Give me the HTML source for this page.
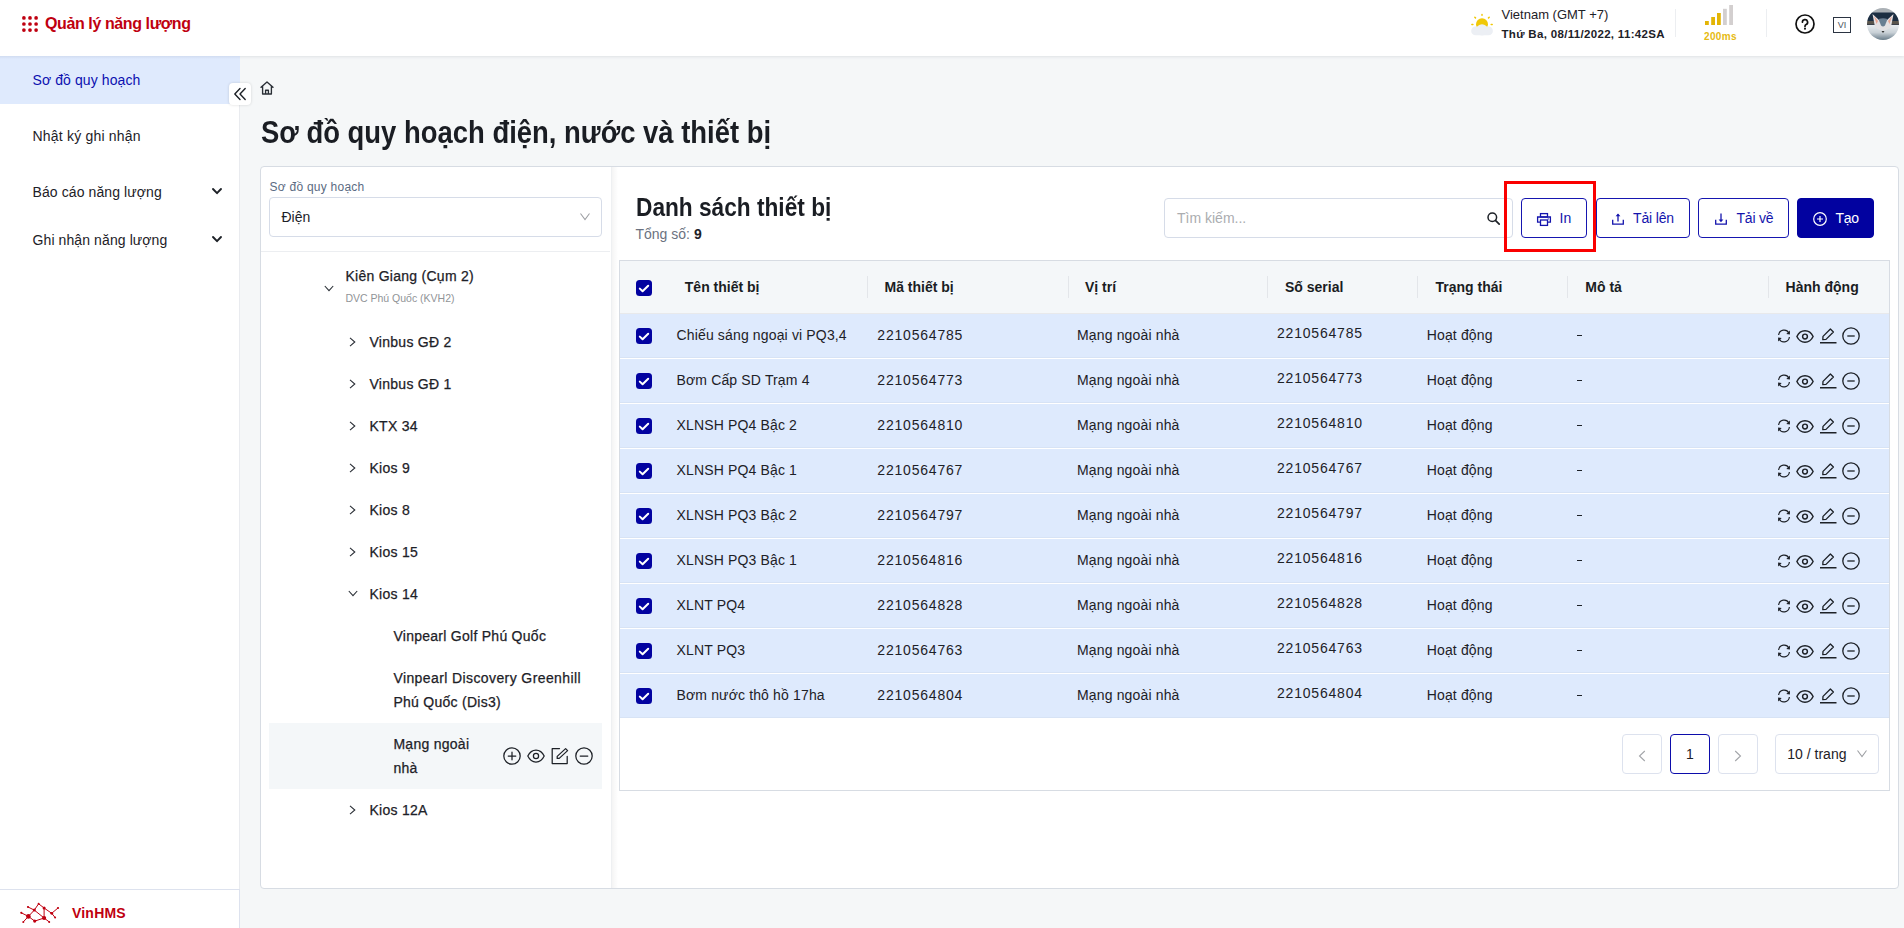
<!DOCTYPE html><html><head><meta charset="utf-8"><style>
*{box-sizing:border-box;margin:0;padding:0}
html,body{width:1904px;height:928px;overflow:hidden;background:#f5f7f8;font-family:"Liberation Sans",sans-serif;color:#1d2127}
.a{position:absolute;white-space:nowrap}
svg{display:block;position:absolute;overflow:visible}
.t14{font-size:14px;line-height:14px}
.chk{position:absolute;width:16px;height:16px;border-radius:3.5px;background:#0202a0}
.btn{position:absolute;top:198px;height:40px;border:1.3px solid #1616b0;border-radius:4px;background:#fff}
.pg{position:absolute;top:734px;width:40px;height:40px;border:1px solid #dde2ee;border-radius:4px;background:#fff}
</style></head><body>
<div class="a" style="left:0;top:0;width:1904px;height:56px;background:#fff;box-shadow:0 1px 3px rgba(30,40,60,.10)"></div>
<svg style="left:22px;top:16px" width="16" height="16" viewBox="0 0 16 16" fill="#bf0010"><circle cx="1.9" cy="1.9" r="1.85"/><circle cx="8" cy="1.9" r="1.85"/><circle cx="14.1" cy="1.9" r="1.85"/><circle cx="1.9" cy="8" r="1.85"/><circle cx="8" cy="8" r="1.85"/><circle cx="14.1" cy="8" r="1.85"/><circle cx="1.9" cy="14.1" r="1.85"/><circle cx="8" cy="14.1" r="1.85"/><circle cx="14.1" cy="14.1" r="1.85"/></svg>
<div class="a" style="left:45px;top:16.26px;font-size:16px;line-height:16px;font-weight:700;color:#bf0010;letter-spacing:-0.4px">Quản lý năng lượng</div>
<svg style="left:1470px;top:13px" width="24" height="22" viewBox="0 0 24 22">
<g stroke="#f0c808" stroke-width="1.5" stroke-linecap="round">
<line x1="12" y1="1.5" x2="12" y2="2.3"/><line x1="4.8" y1="4.2" x2="5.5" y2="4.9"/><line x1="19.2" y1="4.2" x2="18.5" y2="4.9"/>
<line x1="1.9" y1="11.5" x2="2.9" y2="11.5"/><line x1="21.2" y1="11.5" x2="22.2" y2="11.5"/></g>
<circle cx="12" cy="11.3" r="6" fill="#f0c808"/>
<rect x="1.2" y="13.6" width="21.7" height="8.6" rx="4.3" fill="#eceff4"/>
<circle cx="12" cy="16.8" r="5.6" fill="#eceff4"/>
</svg>
<div class="a" style="left:1501.5px;top:8.20px;font-size:13px;line-height:13px;color:#1d2127">Vietnam (GMT +7)</div>
<div class="a" style="left:1501.5px;top:28.67px;font-size:11.5px;line-height:11.5px;font-weight:700;color:#1d2127;letter-spacing:0.32px">Thứ Ba, 08/11/2022, 11:42SA</div>
<div class="a" style="left:1675px;top:9px;width:1px;height:28px;background:#eceef1"></div>
<svg style="left:1705px;top:5px" width="28" height="20" viewBox="0 0 28 20"><rect x="0" y="16" width="3.8" height="4" fill="#e3b505"/><rect x="6.2" y="12" width="3.8" height="8" fill="#e3b505"/><rect x="12" y="8" width="3.8" height="12" fill="#e3b505"/><rect x="18" y="3.8" width="3.8" height="16.2" fill="#d3cfcf"/><rect x="24.2" y="0" width="3.8" height="20" fill="#d3cfcf"/></svg>
<div class="a" style="left:1704px;top:31.54px;font-size:10px;line-height:10px;font-weight:700;color:#e6ba10;letter-spacing:0.35px">200ms</div>
<div class="a" style="left:1766px;top:9px;width:1px;height:28px;background:#eceef1"></div>
<svg style="left:1795px;top:14px" width="20" height="20" viewBox="0 0 20 20"><circle cx="10" cy="10" r="9" fill="none" stroke="#111" stroke-width="1.7"/><path d="M7.4 8.2 a2.6 2.6 0 1 1 3.7 2.3 c-0.8 0.4 -1.1 0.9 -1.1 1.7 v0.4" fill="none" stroke="#111" stroke-width="1.7" stroke-linecap="round"/><circle cx="10" cy="14.7" r="1.05" fill="#111"/></svg>
<div class="a" style="left:1833px;top:17px;width:18px;height:16px;border:1.3px solid #2b3442"></div>
<div class="a" style="left:1833px;top:20px;width:18px;text-align:center;font-size:9px;line-height:10px;color:#4a5260">VI</div>
<svg style="left:1867px;top:8px" width="32" height="32" viewBox="0 0 32 32">
<defs><clipPath id="av"><circle cx="16" cy="16" r="16"/></clipPath>
<linearGradient id="fur" x1="0" y1="0" x2="0" y2="1"><stop offset="0" stop-color="#e9edf0"/><stop offset="0.45" stop-color="#c8d0d6"/><stop offset="1" stop-color="#4f6676"/></linearGradient>
<filter id="bl"><feGaussianBlur stdDeviation="0.5"/></filter></defs>
<g clip-path="url(#av)"><g filter="url(#bl)">
<rect x="-2" y="-2" width="36" height="36" fill="#1d2d42"/>
<rect x="-2" y="-2" width="36" height="6.5" fill="#aab0b5"/>
<rect x="-2" y="13" width="36" height="3.5" fill="#5a544e"/>
<rect x="-2" y="17" width="36" height="17" fill="url(#fur)"/>
<path d="M5.5 6 L12 12 L20 12 L26.5 6 L24 19 Q16 26 8 19 Z" fill="#e4e1e3"/>
<path d="M7 8 L11 13 L9.5 16Z M25 8 L21 13 L22.5 16Z" fill="#e9a592"/>
<path d="M11.5 11 Q16 9.5 20.5 11 L18 17.5 Q16 19.5 14 17.5Z" fill="#6b7f92"/>
<path d="M14.5 23 L17.5 23 L16 25Z" fill="#333"/>
</g></g></svg>
<div class="a" style="left:0;top:56px;width:240px;height:872px;background:#fff;border-right:1px solid #e9ebef"></div>
<div class="a" style="left:239px;top:889px;width:1px;height:39px;background:#dde2ee"></div>
<div class="a" style="left:0;top:56px;width:240px;height:48px;background:#dfeafd"></div>
<div class="a" style="left:0;top:56px;width:240px;height:3px;background:linear-gradient(rgba(40,60,100,.08),rgba(40,60,100,0))"></div>
<div class="a t14" style="left:32.5px;top:73.15px;color:#0c10b0;letter-spacing:0.1px">Sơ đồ quy hoạch</div>
<div class="a t14" style="left:32.5px;top:128.95px;color:#1d2127;letter-spacing:0.2px">Nhật ký ghi nhận</div>
<div class="a t14" style="left:32.5px;top:184.85px;color:#1d2127;letter-spacing:0.1px">Báo cáo năng lượng</div>
<div class="a t14" style="left:32.5px;top:232.85px;color:#1d2127;letter-spacing:0.1px">Ghi nhận năng lượng</div>
<svg style="left:212px;top:188.4px" width="10" height="7" viewBox="0 0 10 7"><path d="M1 1 L5 5.2 L9 1" fill="none" stroke="#1d2127" stroke-width="1.9" stroke-linecap="round" stroke-linejoin="round"/></svg>
<svg style="left:212px;top:236px" width="10" height="7" viewBox="0 0 10 7"><path d="M1 1 L5 5.2 L9 1" fill="none" stroke="#1d2127" stroke-width="1.9" stroke-linecap="round" stroke-linejoin="round"/></svg>
<div class="a" style="left:0;top:889px;width:239px;height:1px;background:#dde2ee"></div>
<svg style="left:19px;top:902px" width="42" height="22" viewBox="0 0 42 22">
<g stroke="#bf0010" stroke-width="1" fill="none" stroke-linecap="round">
<path d="M2.3 10.8 L9.4 14.4 L4.3 19.9 M9.4 14.4 L15.3 8.1 L9 5 M15.3 8.1 L19.6 1.8 L25.1 6 L25.1 16 L30.2 19.9 M9.4 14.4 L15.7 19.1 L25.1 16 M15.3 8.1 L25.1 16 M25.1 6 L32.7 11.3 L39 6 M32.7 11.3 L36.1 15.5"/>
</g>
<g fill="#bf0010">
<circle cx="9.4" cy="14.4" r="2.3"/><circle cx="25.1" cy="16" r="2.1"/><circle cx="15.7" cy="19.1" r="1.6"/><circle cx="15.3" cy="8.1" r="1.5"/>
<circle cx="25.1" cy="6" r="1.5"/><circle cx="32.7" cy="11.3" r="1.4"/><circle cx="19.6" cy="1.8" r="1"/><circle cx="9" cy="5" r="1.1"/>
<circle cx="2.3" cy="10.8" r="1.1"/><circle cx="4.3" cy="19.9" r="1"/><circle cx="30.2" cy="19.9" r="1"/><circle cx="39" cy="6" r="1.1"/><circle cx="36.1" cy="15.5" r="1"/>
</g></svg>
<div class="a" style="left:72px;top:906.15px;font-size:14px;line-height:14px;font-weight:700;color:#bf0010;letter-spacing:0.2px">VinHMS</div>
<div class="a" style="left:229px;top:83px;width:22px;height:22px;background:#fff;border-radius:4px;box-shadow:0 0 3px rgba(0,0,0,.15)"></div>
<svg style="left:233px;top:87px" width="14" height="14" viewBox="0 0 14 14"><path d="M7 1.5 L1.8 7 L7 12.5 M12.2 1.5 L7 7 L12.2 12.5" fill="none" stroke="#1d2127" stroke-width="1.4" stroke-linecap="round" stroke-linejoin="round"/></svg>
<svg style="left:260px;top:81px" width="14" height="14" viewBox="0 0 14 14"><path d="M1 6.3 L7 1 L13 6.3 M2.6 5.2 V13 H11.4 V5.2 M5.6 13 V9.2 H8.4 V13" fill="none" stroke="#2a2f36" stroke-width="1.35" stroke-linejoin="round" stroke-linecap="round"/></svg>
<div class="a" style="left:260.5px;top:117.06px;font-size:31px;line-height:31px;font-weight:700;color:#1a1d23;transform:scaleX(0.885);transform-origin:0 0">Sơ đồ quy hoạch điện, nước và thiết bị</div>
<div class="a" style="left:260px;top:166px;width:1639px;height:723px;background:#fff;border:1px solid #d7dce3;border-radius:4px"></div>
<div class="a" style="left:269.5px;top:180.54px;font-size:12px;line-height:12px;color:#5b6b82;letter-spacing:0.25px">Sơ đồ quy hoạch</div>
<div class="a" style="left:269px;top:197px;width:333px;height:40px;border:1px solid #d6dce8;border-radius:4px;background:#fff"></div>
<div class="a t14" style="left:281.5px;top:210.15px;color:#1d2127">Điện</div>
<svg style="left:579.8px;top:212.8px" width="10" height="7.2" viewBox="0 0 10 7.2"><path d="M0.5 0.5 L5 6.6 L9.5 0.5" fill="none" stroke="#9c9ea2" stroke-width="1.05"/></svg>
<div class="a" style="left:261px;top:251px;width:349px;height:1px;background:#eceef1"></div>
<div class="a" style="left:611px;top:167px;width:1px;height:721px;background:#eef0f2"></div>
<div class="a" style="left:612px;top:167px;width:6px;height:721px;background:linear-gradient(90deg,rgba(0,0,0,.045),rgba(0,0,0,0))"></div>
<svg style="left:324px;top:285px" width="10" height="7" viewBox="0 0 10 7"><path d="M0.8 1 L5 5.6 L9.2 1" fill="none" stroke="#2a2f36" stroke-width="1.1"/></svg>
<div class="a" style="left:345.4px;top:268.95px;font-size:14px;line-height:14px;color:#1d2127;-webkit-text-stroke:0.25px #1d2127;letter-spacing:0.27px">Kiên Giang (Cụm 2)</div>
<div class="a" style="left:345.4px;top:293.31px;font-size:10.5px;line-height:10.5px;color:#919497">DVC Phú Quốc (KVH2)</div>
<svg style="left:349px;top:337.09999999999997px" width="7" height="10" viewBox="0 0 7 10"><path d="M1 0.8 L5.8 5 L1 9.2" fill="none" stroke="#2a2f36" stroke-width="1.1"/></svg>
<div class="a" style="left:369.5px;top:334.85px;font-size:14px;line-height:14px;color:#1d2127;-webkit-text-stroke:0.25px #1d2127;letter-spacing:0.27px">Vinbus GĐ 2</div>
<svg style="left:349px;top:379.09999999999997px" width="7" height="10" viewBox="0 0 7 10"><path d="M1 0.8 L5.8 5 L1 9.2" fill="none" stroke="#2a2f36" stroke-width="1.1"/></svg>
<div class="a" style="left:369.5px;top:376.85px;font-size:14px;line-height:14px;color:#1d2127;-webkit-text-stroke:0.25px #1d2127;letter-spacing:0.27px">Vinbus GĐ 1</div>
<svg style="left:349px;top:421.09999999999997px" width="7" height="10" viewBox="0 0 7 10"><path d="M1 0.8 L5.8 5 L1 9.2" fill="none" stroke="#2a2f36" stroke-width="1.1"/></svg>
<div class="a" style="left:369.5px;top:418.85px;font-size:14px;line-height:14px;color:#1d2127;-webkit-text-stroke:0.25px #1d2127;letter-spacing:0.27px">KTX 34</div>
<svg style="left:349px;top:463.09999999999997px" width="7" height="10" viewBox="0 0 7 10"><path d="M1 0.8 L5.8 5 L1 9.2" fill="none" stroke="#2a2f36" stroke-width="1.1"/></svg>
<div class="a" style="left:369.5px;top:460.85px;font-size:14px;line-height:14px;color:#1d2127;-webkit-text-stroke:0.25px #1d2127;letter-spacing:0.27px">Kios 9</div>
<svg style="left:349px;top:505.1px" width="7" height="10" viewBox="0 0 7 10"><path d="M1 0.8 L5.8 5 L1 9.2" fill="none" stroke="#2a2f36" stroke-width="1.1"/></svg>
<div class="a" style="left:369.5px;top:502.85px;font-size:14px;line-height:14px;color:#1d2127;-webkit-text-stroke:0.25px #1d2127;letter-spacing:0.27px">Kios 8</div>
<svg style="left:349px;top:547.1px" width="7" height="10" viewBox="0 0 7 10"><path d="M1 0.8 L5.8 5 L1 9.2" fill="none" stroke="#2a2f36" stroke-width="1.1"/></svg>
<div class="a" style="left:369.5px;top:544.85px;font-size:14px;line-height:14px;color:#1d2127;-webkit-text-stroke:0.25px #1d2127;letter-spacing:0.27px">Kios 15</div>
<svg style="left:348px;top:590.2px" width="10" height="7" viewBox="0 0 10 7"><path d="M0.8 1 L5 5.6 L9.2 1" fill="none" stroke="#2a2f36" stroke-width="1.1"/></svg>
<div class="a" style="left:369.5px;top:586.85px;font-size:14px;line-height:14px;color:#1d2127;-webkit-text-stroke:0.25px #1d2127;letter-spacing:0.27px">Kios 14</div>
<div class="a" style="left:393.4px;top:629.15px;font-size:14px;line-height:14px;color:#1d2127;-webkit-text-stroke:0.25px #1d2127;letter-spacing:0.27px">Vinpearl Golf Phú Quốc</div>
<div class="a" style="left:393.4px;top:671.45px;font-size:14px;line-height:14px;color:#1d2127;-webkit-text-stroke:0.25px #1d2127;letter-spacing:0.27px;letter-spacing:0.4px">Vinpearl Discovery Greenhill</div>
<div class="a" style="left:393.4px;top:695.25px;font-size:14px;line-height:14px;color:#1d2127;-webkit-text-stroke:0.25px #1d2127;letter-spacing:0.27px">Phú Quốc (Dis3)</div>
<div class="a" style="left:269px;top:723px;width:333px;height:66px;background:#f4f7f9"></div>
<div class="a" style="left:393.4px;top:737.45px;font-size:14px;line-height:14px;color:#1d2127;-webkit-text-stroke:0.25px #1d2127;letter-spacing:0.27px">Mạng ngoài</div>
<div class="a" style="left:393.4px;top:761.15px;font-size:14px;line-height:14px;color:#1d2127;-webkit-text-stroke:0.25px #1d2127;letter-spacing:0.27px">nhà</div>
<svg style="left:349px;top:805.4px" width="7" height="10" viewBox="0 0 7 10"><path d="M1 0.8 L5.8 5 L1 9.2" fill="none" stroke="#2a2f36" stroke-width="1.1"/></svg>
<div class="a" style="left:369.5px;top:803.15px;font-size:14px;line-height:14px;color:#1d2127;-webkit-text-stroke:0.25px #1d2127;letter-spacing:0.27px">Kios 12A</div>
<svg style="left:502.5px;top:747px" width="18" height="18" viewBox="0 0 18 18"><g fill="none" stroke="#1d2127" stroke-width="1.25" stroke-linecap="round" stroke-linejoin="round"><circle cx="9" cy="9" r="8.2"/><path d="M9 5.2 V12.8 M5.2 9 H12.8"/></g></svg>
<svg style="left:526.5px;top:749px" width="18" height="14" viewBox="0 0 18 14"><g fill="none" stroke="#1d2127" stroke-width="1.25" stroke-linecap="round" stroke-linejoin="round"><path d="M0.8 7 C3 2.4 6 1 9 1 C12 1 15 2.4 17.2 7 C15 11.6 12 13 9 13 C6 13 3 11.6 0.8 7Z"/><circle cx="9" cy="7" r="2.6"/></g></svg>
<svg style="left:551px;top:747px" width="18" height="18" viewBox="0 0 18 18"><g fill="none" stroke="#1d2127" stroke-width="1.25" stroke-linecap="round" stroke-linejoin="round"><path d="M8.5 1.6 H1.2 V16.6 H16.2 V9.3"/><path d="M14.6 1.6 L16.6 3.6 L8.2 11.4 H6.2 V9.4Z"/></g></svg>
<svg style="left:575px;top:747px" width="18" height="18" viewBox="0 0 18 18"><g fill="none" stroke="#1d2127" stroke-width="1.25" stroke-linecap="round" stroke-linejoin="round"><circle cx="9" cy="9" r="8.2"/><path d="M5.2 9 H12.8"/></g></svg>
<div class="a" style="left:635.5px;top:194.84px;font-size:25px;line-height:25px;font-weight:700;color:#1a1d23;transform:scaleX(0.907);transform-origin:0 0">Danh sách thiết bị</div>
<div class="a t14" style="left:635.5px;top:226.85px;color:#6b7280">Tổng số: <b style="color:#1d2127">9</b></div>
<div class="a" style="left:1164px;top:198px;width:349px;height:40px;border:1px solid #d6dce8;border-radius:4px;background:#fff"></div>
<div class="a t14" style="left:1177px;top:211.15px;color:#abadb0">Tìm kiếm...</div>
<svg style="left:1487px;top:212px" width="13" height="13" viewBox="0 0 13 13"><circle cx="5.3" cy="5.3" r="4.3" fill="none" stroke="#1d2127" stroke-width="1.5"/><path d="M8.4 8.4 L12.2 12.2" stroke="#1d2127" stroke-width="1.7" stroke-linecap="round"/></svg>
<div class="btn" style="left:1521px;width:66px"></div>
<svg style="left:1537px;top:212.5px" width="14" height="13" viewBox="0 0 14 13"><g fill="none" stroke="#1414ad" stroke-width="1.3"><rect x="3.5" y="0.6" width="7" height="3.4"/><path d="M3.5 9.2 H0.6 V4 H13.4 V9.2 H10.5"/><rect x="3.5" y="7" width="7" height="5.4"/></g><circle cx="11.2" cy="5.9" r="0.6" fill="#1414ad"/></svg>
<div class="a t14" style="left:1559.5px;top:211.05px;color:#1414ad">In</div>
<div class="btn" style="left:1595.5px;width:94.5px"></div>
<svg style="left:1612px;top:212.7px" width="12" height="12" viewBox="0 0 12 12"><g fill="none" stroke="#1414ad" stroke-width="1.3"><path d="M0.7 6.8 V11.2 H11.3 V6.8"/><path d="M6 8.4 V1.5"/></g><path d="M3.6 3.2 L6 0.6 L8.4 3.2Z" fill="#1414ad"/></svg>
<div class="a t14" style="left:1633px;top:211.05px;color:#1414ad;letter-spacing:-0.15px">Tải lên</div>
<div class="btn" style="left:1698px;width:91px"></div>
<svg style="left:1715px;top:213px" width="12" height="12" viewBox="0 0 12 12"><g fill="none" stroke="#1414ad" stroke-width="1.3"><path d="M0.7 6.8 V11.2 H11.3 V6.8"/><path d="M6 0.5 V7.2"/></g><path d="M3.6 6.6 L6 9.2 L8.4 6.6Z" fill="#1414ad"/></svg>
<div class="a t14" style="left:1736.5px;top:211.05px;color:#1414ad;letter-spacing:-0.2px">Tải về</div>
<div class="btn" style="left:1797px;width:77px;background:#0202a0;border-color:#0202a0"></div>
<svg style="left:1813px;top:212px" width="14" height="14" viewBox="0 0 14 14"><g fill="none" stroke="#fff" stroke-width="1.2"><circle cx="7" cy="7" r="6.3"/><path d="M7 4 V10 M4 7 H10"/></g></svg>
<div class="a t14" style="left:1835.5px;top:211.05px;color:#fff;letter-spacing:-0.3px">Tạo</div>
<div class="a" style="left:1504px;top:181px;width:92px;height:71px;border:3px solid #fa0000"></div>
<div class="a" style="left:619px;top:260px;width:1271px;height:531px;border:1px solid #d7dce3;background:#fff"></div>
<div class="a" style="left:620px;top:261px;width:1269px;height:53px;background:#f4f7f9;border-bottom:1px solid #e8e9eb"></div>
<div class="chk" style="left:636px;top:280px"></div><svg style="left:636px;top:280px" width="16" height="16" viewBox="0 0 16 16"><path d="M3.8 8.6 L6.6 11.3 L12.2 5.8" fill="none" stroke="#fff" stroke-width="2" stroke-linecap="round" stroke-linejoin="round"/></svg>
<div class="a" style="left:684.8px;top:279.95px;font-size:14px;line-height:14px;font-weight:700;color:#1a1d23">Tên thiết bị</div>
<div class="a" style="left:884.5px;top:279.95px;font-size:14px;line-height:14px;font-weight:700;color:#1a1d23">Mã thiết bị</div>
<div class="a" style="left:1085px;top:279.95px;font-size:14px;line-height:14px;font-weight:700;color:#1a1d23">Vị trí</div>
<div class="a" style="left:1285px;top:279.95px;font-size:14px;line-height:14px;font-weight:700;color:#1a1d23">Số serial</div>
<div class="a" style="left:1435.5px;top:279.95px;font-size:14px;line-height:14px;font-weight:700;color:#1a1d23">Trạng thái</div>
<div class="a" style="left:1585.3px;top:279.95px;font-size:14px;line-height:14px;font-weight:700;color:#1a1d23">Mô tả</div>
<div class="a" style="left:1785.6px;top:279.95px;font-size:14px;line-height:14px;font-weight:700;color:#1a1d23">Hành động</div>
<div class="a" style="left:867px;top:276px;width:1px;height:22px;background:#e3e6ea"></div>
<div class="a" style="left:1068px;top:276px;width:1px;height:22px;background:#e3e6ea"></div>
<div class="a" style="left:1267px;top:276px;width:1px;height:22px;background:#e3e6ea"></div>
<div class="a" style="left:1417px;top:276px;width:1px;height:22px;background:#e3e6ea"></div>
<div class="a" style="left:1567px;top:276px;width:1px;height:22px;background:#e3e6ea"></div>
<div class="a" style="left:1768px;top:276px;width:1px;height:22px;background:#e3e6ea"></div>
<div class="a" style="left:620px;top:314px;width:1269px;height:44px;background:#deeafd;border-bottom:1px solid #d7e3f5"></div>
<div class="chk" style="left:636px;top:328px"></div><svg style="left:636px;top:328px" width="16" height="16" viewBox="0 0 16 16"><path d="M3.8 8.6 L6.6 11.3 L12.2 5.8" fill="none" stroke="#fff" stroke-width="2" stroke-linecap="round" stroke-linejoin="round"/></svg>
<div class="a" style="left:676.5px;top:328.05px;font-size:14px;line-height:14px;color:#1d2127;letter-spacing:0.15px">Chiếu sáng ngoại vi PQ3,4</div>
<div class="a" style="left:877.3px;top:328.05px;font-size:14px;line-height:14px;color:#1d2127;letter-spacing:0.15px;letter-spacing:0.8px">2210564785</div>
<div class="a" style="left:1077px;top:328.05px;font-size:14px;line-height:14px;color:#1d2127;letter-spacing:0.15px">Mạng ngoài nhà</div>
<div class="a" style="left:1277px;top:325.85px;font-size:14px;line-height:14px;color:#1d2127;letter-spacing:0.15px;letter-spacing:0.8px">2210564785</div>
<div class="a" style="left:1426.7px;top:328.05px;font-size:14px;line-height:14px;color:#1d2127;letter-spacing:0.15px">Hoạt động</div>
<div class="a" style="left:1577.3px;top:334.70px;width:5px;height:1.6px;background:#1d2127"></div>
<svg style="left:1776.5px;top:329px" width="14" height="14" viewBox="0 0 14 14"><g fill="none" stroke="#1d2127" stroke-width="1.2"><path d="M1.6 6 A5.5 5.5 0 0 1 12 4.2"/><path d="M12.4 8 A5.5 5.5 0 0 1 2 9.8"/></g><path d="M12.9 1.6 L12.9 5.4 L9.3 4.9Z M1.1 12.4 L1.1 8.6 L4.7 9.1Z" fill="#1d2127"/></svg>
<svg style="left:1796px;top:329.5px" width="18" height="13" viewBox="0 0 18 13"><g fill="none" stroke="#1d2127" stroke-width="1.45"><path d="M0.9 6.5 C3 2 6 0.8 9 0.8 C12 0.8 15 2 17.1 6.5 C15 11 12 12.2 9 12.2 C6 12.2 3 11 0.9 6.5Z"/><circle cx="9" cy="6.5" r="2.4"/></g></svg>
<svg style="left:1820px;top:327px" width="17" height="17" viewBox="0 0 17 17"><g fill="none" stroke="#1d2127" stroke-width="1.3" stroke-linejoin="round"><path d="M2.8 12.6 L3 9.4 L10.4 2 L13.4 5 L6 12.4Z"/></g><rect x="0" y="15" width="16.5" height="1.5" fill="#1d2127"/></svg>
<svg style="left:1842px;top:327px" width="18" height="18" viewBox="0 0 18 18"><g fill="none" stroke="#1d2127" stroke-width="1.3"><circle cx="9" cy="9" r="8.2"/><path d="M5.3 9 H12.7"/></g></svg>
<div class="a" style="left:620px;top:359px;width:1269px;height:44px;background:#deeafd;border-bottom:1px solid #d7e3f5"></div>
<div class="chk" style="left:636px;top:373px"></div><svg style="left:636px;top:373px" width="16" height="16" viewBox="0 0 16 16"><path d="M3.8 8.6 L6.6 11.3 L12.2 5.8" fill="none" stroke="#fff" stroke-width="2" stroke-linecap="round" stroke-linejoin="round"/></svg>
<div class="a" style="left:676.5px;top:373.05px;font-size:14px;line-height:14px;color:#1d2127;letter-spacing:0.15px">Bơm Cấp SD Trạm 4</div>
<div class="a" style="left:877.3px;top:373.05px;font-size:14px;line-height:14px;color:#1d2127;letter-spacing:0.15px;letter-spacing:0.8px">2210564773</div>
<div class="a" style="left:1077px;top:373.05px;font-size:14px;line-height:14px;color:#1d2127;letter-spacing:0.15px">Mạng ngoài nhà</div>
<div class="a" style="left:1277px;top:370.85px;font-size:14px;line-height:14px;color:#1d2127;letter-spacing:0.15px;letter-spacing:0.8px">2210564773</div>
<div class="a" style="left:1426.7px;top:373.05px;font-size:14px;line-height:14px;color:#1d2127;letter-spacing:0.15px">Hoạt động</div>
<div class="a" style="left:1577.3px;top:379.70px;width:5px;height:1.6px;background:#1d2127"></div>
<svg style="left:1776.5px;top:374px" width="14" height="14" viewBox="0 0 14 14"><g fill="none" stroke="#1d2127" stroke-width="1.2"><path d="M1.6 6 A5.5 5.5 0 0 1 12 4.2"/><path d="M12.4 8 A5.5 5.5 0 0 1 2 9.8"/></g><path d="M12.9 1.6 L12.9 5.4 L9.3 4.9Z M1.1 12.4 L1.1 8.6 L4.7 9.1Z" fill="#1d2127"/></svg>
<svg style="left:1796px;top:374.5px" width="18" height="13" viewBox="0 0 18 13"><g fill="none" stroke="#1d2127" stroke-width="1.45"><path d="M0.9 6.5 C3 2 6 0.8 9 0.8 C12 0.8 15 2 17.1 6.5 C15 11 12 12.2 9 12.2 C6 12.2 3 11 0.9 6.5Z"/><circle cx="9" cy="6.5" r="2.4"/></g></svg>
<svg style="left:1820px;top:372px" width="17" height="17" viewBox="0 0 17 17"><g fill="none" stroke="#1d2127" stroke-width="1.3" stroke-linejoin="round"><path d="M2.8 12.6 L3 9.4 L10.4 2 L13.4 5 L6 12.4Z"/></g><rect x="0" y="15" width="16.5" height="1.5" fill="#1d2127"/></svg>
<svg style="left:1842px;top:372px" width="18" height="18" viewBox="0 0 18 18"><g fill="none" stroke="#1d2127" stroke-width="1.3"><circle cx="9" cy="9" r="8.2"/><path d="M5.3 9 H12.7"/></g></svg>
<div class="a" style="left:620px;top:404px;width:1269px;height:44px;background:#deeafd;border-bottom:1px solid #d7e3f5"></div>
<div class="chk" style="left:636px;top:418px"></div><svg style="left:636px;top:418px" width="16" height="16" viewBox="0 0 16 16"><path d="M3.8 8.6 L6.6 11.3 L12.2 5.8" fill="none" stroke="#fff" stroke-width="2" stroke-linecap="round" stroke-linejoin="round"/></svg>
<div class="a" style="left:676.5px;top:418.05px;font-size:14px;line-height:14px;color:#1d2127;letter-spacing:0.15px">XLNSH PQ4 Bậc 2</div>
<div class="a" style="left:877.3px;top:418.05px;font-size:14px;line-height:14px;color:#1d2127;letter-spacing:0.15px;letter-spacing:0.8px">2210564810</div>
<div class="a" style="left:1077px;top:418.05px;font-size:14px;line-height:14px;color:#1d2127;letter-spacing:0.15px">Mạng ngoài nhà</div>
<div class="a" style="left:1277px;top:415.85px;font-size:14px;line-height:14px;color:#1d2127;letter-spacing:0.15px;letter-spacing:0.8px">2210564810</div>
<div class="a" style="left:1426.7px;top:418.05px;font-size:14px;line-height:14px;color:#1d2127;letter-spacing:0.15px">Hoạt động</div>
<div class="a" style="left:1577.3px;top:424.70px;width:5px;height:1.6px;background:#1d2127"></div>
<svg style="left:1776.5px;top:419px" width="14" height="14" viewBox="0 0 14 14"><g fill="none" stroke="#1d2127" stroke-width="1.2"><path d="M1.6 6 A5.5 5.5 0 0 1 12 4.2"/><path d="M12.4 8 A5.5 5.5 0 0 1 2 9.8"/></g><path d="M12.9 1.6 L12.9 5.4 L9.3 4.9Z M1.1 12.4 L1.1 8.6 L4.7 9.1Z" fill="#1d2127"/></svg>
<svg style="left:1796px;top:419.5px" width="18" height="13" viewBox="0 0 18 13"><g fill="none" stroke="#1d2127" stroke-width="1.45"><path d="M0.9 6.5 C3 2 6 0.8 9 0.8 C12 0.8 15 2 17.1 6.5 C15 11 12 12.2 9 12.2 C6 12.2 3 11 0.9 6.5Z"/><circle cx="9" cy="6.5" r="2.4"/></g></svg>
<svg style="left:1820px;top:417px" width="17" height="17" viewBox="0 0 17 17"><g fill="none" stroke="#1d2127" stroke-width="1.3" stroke-linejoin="round"><path d="M2.8 12.6 L3 9.4 L10.4 2 L13.4 5 L6 12.4Z"/></g><rect x="0" y="15" width="16.5" height="1.5" fill="#1d2127"/></svg>
<svg style="left:1842px;top:417px" width="18" height="18" viewBox="0 0 18 18"><g fill="none" stroke="#1d2127" stroke-width="1.3"><circle cx="9" cy="9" r="8.2"/><path d="M5.3 9 H12.7"/></g></svg>
<div class="a" style="left:620px;top:449px;width:1269px;height:44px;background:#deeafd;border-bottom:1px solid #d7e3f5"></div>
<div class="chk" style="left:636px;top:463px"></div><svg style="left:636px;top:463px" width="16" height="16" viewBox="0 0 16 16"><path d="M3.8 8.6 L6.6 11.3 L12.2 5.8" fill="none" stroke="#fff" stroke-width="2" stroke-linecap="round" stroke-linejoin="round"/></svg>
<div class="a" style="left:676.5px;top:463.05px;font-size:14px;line-height:14px;color:#1d2127;letter-spacing:0.15px">XLNSH PQ4 Bậc 1</div>
<div class="a" style="left:877.3px;top:463.05px;font-size:14px;line-height:14px;color:#1d2127;letter-spacing:0.15px;letter-spacing:0.8px">2210564767</div>
<div class="a" style="left:1077px;top:463.05px;font-size:14px;line-height:14px;color:#1d2127;letter-spacing:0.15px">Mạng ngoài nhà</div>
<div class="a" style="left:1277px;top:460.85px;font-size:14px;line-height:14px;color:#1d2127;letter-spacing:0.15px;letter-spacing:0.8px">2210564767</div>
<div class="a" style="left:1426.7px;top:463.05px;font-size:14px;line-height:14px;color:#1d2127;letter-spacing:0.15px">Hoạt động</div>
<div class="a" style="left:1577.3px;top:469.70px;width:5px;height:1.6px;background:#1d2127"></div>
<svg style="left:1776.5px;top:464px" width="14" height="14" viewBox="0 0 14 14"><g fill="none" stroke="#1d2127" stroke-width="1.2"><path d="M1.6 6 A5.5 5.5 0 0 1 12 4.2"/><path d="M12.4 8 A5.5 5.5 0 0 1 2 9.8"/></g><path d="M12.9 1.6 L12.9 5.4 L9.3 4.9Z M1.1 12.4 L1.1 8.6 L4.7 9.1Z" fill="#1d2127"/></svg>
<svg style="left:1796px;top:464.5px" width="18" height="13" viewBox="0 0 18 13"><g fill="none" stroke="#1d2127" stroke-width="1.45"><path d="M0.9 6.5 C3 2 6 0.8 9 0.8 C12 0.8 15 2 17.1 6.5 C15 11 12 12.2 9 12.2 C6 12.2 3 11 0.9 6.5Z"/><circle cx="9" cy="6.5" r="2.4"/></g></svg>
<svg style="left:1820px;top:462px" width="17" height="17" viewBox="0 0 17 17"><g fill="none" stroke="#1d2127" stroke-width="1.3" stroke-linejoin="round"><path d="M2.8 12.6 L3 9.4 L10.4 2 L13.4 5 L6 12.4Z"/></g><rect x="0" y="15" width="16.5" height="1.5" fill="#1d2127"/></svg>
<svg style="left:1842px;top:462px" width="18" height="18" viewBox="0 0 18 18"><g fill="none" stroke="#1d2127" stroke-width="1.3"><circle cx="9" cy="9" r="8.2"/><path d="M5.3 9 H12.7"/></g></svg>
<div class="a" style="left:620px;top:494px;width:1269px;height:44px;background:#deeafd;border-bottom:1px solid #d7e3f5"></div>
<div class="chk" style="left:636px;top:508px"></div><svg style="left:636px;top:508px" width="16" height="16" viewBox="0 0 16 16"><path d="M3.8 8.6 L6.6 11.3 L12.2 5.8" fill="none" stroke="#fff" stroke-width="2" stroke-linecap="round" stroke-linejoin="round"/></svg>
<div class="a" style="left:676.5px;top:508.05px;font-size:14px;line-height:14px;color:#1d2127;letter-spacing:0.15px">XLNSH PQ3 Bậc 2</div>
<div class="a" style="left:877.3px;top:508.05px;font-size:14px;line-height:14px;color:#1d2127;letter-spacing:0.15px;letter-spacing:0.8px">2210564797</div>
<div class="a" style="left:1077px;top:508.05px;font-size:14px;line-height:14px;color:#1d2127;letter-spacing:0.15px">Mạng ngoài nhà</div>
<div class="a" style="left:1277px;top:505.85px;font-size:14px;line-height:14px;color:#1d2127;letter-spacing:0.15px;letter-spacing:0.8px">2210564797</div>
<div class="a" style="left:1426.7px;top:508.05px;font-size:14px;line-height:14px;color:#1d2127;letter-spacing:0.15px">Hoạt động</div>
<div class="a" style="left:1577.3px;top:514.70px;width:5px;height:1.6px;background:#1d2127"></div>
<svg style="left:1776.5px;top:509px" width="14" height="14" viewBox="0 0 14 14"><g fill="none" stroke="#1d2127" stroke-width="1.2"><path d="M1.6 6 A5.5 5.5 0 0 1 12 4.2"/><path d="M12.4 8 A5.5 5.5 0 0 1 2 9.8"/></g><path d="M12.9 1.6 L12.9 5.4 L9.3 4.9Z M1.1 12.4 L1.1 8.6 L4.7 9.1Z" fill="#1d2127"/></svg>
<svg style="left:1796px;top:509.5px" width="18" height="13" viewBox="0 0 18 13"><g fill="none" stroke="#1d2127" stroke-width="1.45"><path d="M0.9 6.5 C3 2 6 0.8 9 0.8 C12 0.8 15 2 17.1 6.5 C15 11 12 12.2 9 12.2 C6 12.2 3 11 0.9 6.5Z"/><circle cx="9" cy="6.5" r="2.4"/></g></svg>
<svg style="left:1820px;top:507px" width="17" height="17" viewBox="0 0 17 17"><g fill="none" stroke="#1d2127" stroke-width="1.3" stroke-linejoin="round"><path d="M2.8 12.6 L3 9.4 L10.4 2 L13.4 5 L6 12.4Z"/></g><rect x="0" y="15" width="16.5" height="1.5" fill="#1d2127"/></svg>
<svg style="left:1842px;top:507px" width="18" height="18" viewBox="0 0 18 18"><g fill="none" stroke="#1d2127" stroke-width="1.3"><circle cx="9" cy="9" r="8.2"/><path d="M5.3 9 H12.7"/></g></svg>
<div class="a" style="left:620px;top:539px;width:1269px;height:44px;background:#deeafd;border-bottom:1px solid #d7e3f5"></div>
<div class="chk" style="left:636px;top:553px"></div><svg style="left:636px;top:553px" width="16" height="16" viewBox="0 0 16 16"><path d="M3.8 8.6 L6.6 11.3 L12.2 5.8" fill="none" stroke="#fff" stroke-width="2" stroke-linecap="round" stroke-linejoin="round"/></svg>
<div class="a" style="left:676.5px;top:553.05px;font-size:14px;line-height:14px;color:#1d2127;letter-spacing:0.15px">XLNSH PQ3 Bậc 1</div>
<div class="a" style="left:877.3px;top:553.05px;font-size:14px;line-height:14px;color:#1d2127;letter-spacing:0.15px;letter-spacing:0.8px">2210564816</div>
<div class="a" style="left:1077px;top:553.05px;font-size:14px;line-height:14px;color:#1d2127;letter-spacing:0.15px">Mạng ngoài nhà</div>
<div class="a" style="left:1277px;top:550.85px;font-size:14px;line-height:14px;color:#1d2127;letter-spacing:0.15px;letter-spacing:0.8px">2210564816</div>
<div class="a" style="left:1426.7px;top:553.05px;font-size:14px;line-height:14px;color:#1d2127;letter-spacing:0.15px">Hoạt động</div>
<div class="a" style="left:1577.3px;top:559.70px;width:5px;height:1.6px;background:#1d2127"></div>
<svg style="left:1776.5px;top:554px" width="14" height="14" viewBox="0 0 14 14"><g fill="none" stroke="#1d2127" stroke-width="1.2"><path d="M1.6 6 A5.5 5.5 0 0 1 12 4.2"/><path d="M12.4 8 A5.5 5.5 0 0 1 2 9.8"/></g><path d="M12.9 1.6 L12.9 5.4 L9.3 4.9Z M1.1 12.4 L1.1 8.6 L4.7 9.1Z" fill="#1d2127"/></svg>
<svg style="left:1796px;top:554.5px" width="18" height="13" viewBox="0 0 18 13"><g fill="none" stroke="#1d2127" stroke-width="1.45"><path d="M0.9 6.5 C3 2 6 0.8 9 0.8 C12 0.8 15 2 17.1 6.5 C15 11 12 12.2 9 12.2 C6 12.2 3 11 0.9 6.5Z"/><circle cx="9" cy="6.5" r="2.4"/></g></svg>
<svg style="left:1820px;top:552px" width="17" height="17" viewBox="0 0 17 17"><g fill="none" stroke="#1d2127" stroke-width="1.3" stroke-linejoin="round"><path d="M2.8 12.6 L3 9.4 L10.4 2 L13.4 5 L6 12.4Z"/></g><rect x="0" y="15" width="16.5" height="1.5" fill="#1d2127"/></svg>
<svg style="left:1842px;top:552px" width="18" height="18" viewBox="0 0 18 18"><g fill="none" stroke="#1d2127" stroke-width="1.3"><circle cx="9" cy="9" r="8.2"/><path d="M5.3 9 H12.7"/></g></svg>
<div class="a" style="left:620px;top:584px;width:1269px;height:44px;background:#deeafd;border-bottom:1px solid #d7e3f5"></div>
<div class="chk" style="left:636px;top:598px"></div><svg style="left:636px;top:598px" width="16" height="16" viewBox="0 0 16 16"><path d="M3.8 8.6 L6.6 11.3 L12.2 5.8" fill="none" stroke="#fff" stroke-width="2" stroke-linecap="round" stroke-linejoin="round"/></svg>
<div class="a" style="left:676.5px;top:598.05px;font-size:14px;line-height:14px;color:#1d2127;letter-spacing:0.15px">XLNT PQ4</div>
<div class="a" style="left:877.3px;top:598.05px;font-size:14px;line-height:14px;color:#1d2127;letter-spacing:0.15px;letter-spacing:0.8px">2210564828</div>
<div class="a" style="left:1077px;top:598.05px;font-size:14px;line-height:14px;color:#1d2127;letter-spacing:0.15px">Mạng ngoài nhà</div>
<div class="a" style="left:1277px;top:595.85px;font-size:14px;line-height:14px;color:#1d2127;letter-spacing:0.15px;letter-spacing:0.8px">2210564828</div>
<div class="a" style="left:1426.7px;top:598.05px;font-size:14px;line-height:14px;color:#1d2127;letter-spacing:0.15px">Hoạt động</div>
<div class="a" style="left:1577.3px;top:604.70px;width:5px;height:1.6px;background:#1d2127"></div>
<svg style="left:1776.5px;top:599px" width="14" height="14" viewBox="0 0 14 14"><g fill="none" stroke="#1d2127" stroke-width="1.2"><path d="M1.6 6 A5.5 5.5 0 0 1 12 4.2"/><path d="M12.4 8 A5.5 5.5 0 0 1 2 9.8"/></g><path d="M12.9 1.6 L12.9 5.4 L9.3 4.9Z M1.1 12.4 L1.1 8.6 L4.7 9.1Z" fill="#1d2127"/></svg>
<svg style="left:1796px;top:599.5px" width="18" height="13" viewBox="0 0 18 13"><g fill="none" stroke="#1d2127" stroke-width="1.45"><path d="M0.9 6.5 C3 2 6 0.8 9 0.8 C12 0.8 15 2 17.1 6.5 C15 11 12 12.2 9 12.2 C6 12.2 3 11 0.9 6.5Z"/><circle cx="9" cy="6.5" r="2.4"/></g></svg>
<svg style="left:1820px;top:597px" width="17" height="17" viewBox="0 0 17 17"><g fill="none" stroke="#1d2127" stroke-width="1.3" stroke-linejoin="round"><path d="M2.8 12.6 L3 9.4 L10.4 2 L13.4 5 L6 12.4Z"/></g><rect x="0" y="15" width="16.5" height="1.5" fill="#1d2127"/></svg>
<svg style="left:1842px;top:597px" width="18" height="18" viewBox="0 0 18 18"><g fill="none" stroke="#1d2127" stroke-width="1.3"><circle cx="9" cy="9" r="8.2"/><path d="M5.3 9 H12.7"/></g></svg>
<div class="a" style="left:620px;top:629px;width:1269px;height:44px;background:#deeafd;border-bottom:1px solid #d7e3f5"></div>
<div class="chk" style="left:636px;top:643px"></div><svg style="left:636px;top:643px" width="16" height="16" viewBox="0 0 16 16"><path d="M3.8 8.6 L6.6 11.3 L12.2 5.8" fill="none" stroke="#fff" stroke-width="2" stroke-linecap="round" stroke-linejoin="round"/></svg>
<div class="a" style="left:676.5px;top:643.05px;font-size:14px;line-height:14px;color:#1d2127;letter-spacing:0.15px">XLNT PQ3</div>
<div class="a" style="left:877.3px;top:643.05px;font-size:14px;line-height:14px;color:#1d2127;letter-spacing:0.15px;letter-spacing:0.8px">2210564763</div>
<div class="a" style="left:1077px;top:643.05px;font-size:14px;line-height:14px;color:#1d2127;letter-spacing:0.15px">Mạng ngoài nhà</div>
<div class="a" style="left:1277px;top:640.85px;font-size:14px;line-height:14px;color:#1d2127;letter-spacing:0.15px;letter-spacing:0.8px">2210564763</div>
<div class="a" style="left:1426.7px;top:643.05px;font-size:14px;line-height:14px;color:#1d2127;letter-spacing:0.15px">Hoạt động</div>
<div class="a" style="left:1577.3px;top:649.70px;width:5px;height:1.6px;background:#1d2127"></div>
<svg style="left:1776.5px;top:644px" width="14" height="14" viewBox="0 0 14 14"><g fill="none" stroke="#1d2127" stroke-width="1.2"><path d="M1.6 6 A5.5 5.5 0 0 1 12 4.2"/><path d="M12.4 8 A5.5 5.5 0 0 1 2 9.8"/></g><path d="M12.9 1.6 L12.9 5.4 L9.3 4.9Z M1.1 12.4 L1.1 8.6 L4.7 9.1Z" fill="#1d2127"/></svg>
<svg style="left:1796px;top:644.5px" width="18" height="13" viewBox="0 0 18 13"><g fill="none" stroke="#1d2127" stroke-width="1.45"><path d="M0.9 6.5 C3 2 6 0.8 9 0.8 C12 0.8 15 2 17.1 6.5 C15 11 12 12.2 9 12.2 C6 12.2 3 11 0.9 6.5Z"/><circle cx="9" cy="6.5" r="2.4"/></g></svg>
<svg style="left:1820px;top:642px" width="17" height="17" viewBox="0 0 17 17"><g fill="none" stroke="#1d2127" stroke-width="1.3" stroke-linejoin="round"><path d="M2.8 12.6 L3 9.4 L10.4 2 L13.4 5 L6 12.4Z"/></g><rect x="0" y="15" width="16.5" height="1.5" fill="#1d2127"/></svg>
<svg style="left:1842px;top:642px" width="18" height="18" viewBox="0 0 18 18"><g fill="none" stroke="#1d2127" stroke-width="1.3"><circle cx="9" cy="9" r="8.2"/><path d="M5.3 9 H12.7"/></g></svg>
<div class="a" style="left:620px;top:674px;width:1269px;height:44px;background:#deeafd;border-bottom:1px solid #d7e3f5"></div>
<div class="chk" style="left:636px;top:688px"></div><svg style="left:636px;top:688px" width="16" height="16" viewBox="0 0 16 16"><path d="M3.8 8.6 L6.6 11.3 L12.2 5.8" fill="none" stroke="#fff" stroke-width="2" stroke-linecap="round" stroke-linejoin="round"/></svg>
<div class="a" style="left:676.5px;top:688.05px;font-size:14px;line-height:14px;color:#1d2127;letter-spacing:0.15px">Bơm nước thô hồ 17ha</div>
<div class="a" style="left:877.3px;top:688.05px;font-size:14px;line-height:14px;color:#1d2127;letter-spacing:0.15px;letter-spacing:0.8px">2210564804</div>
<div class="a" style="left:1077px;top:688.05px;font-size:14px;line-height:14px;color:#1d2127;letter-spacing:0.15px">Mạng ngoài nhà</div>
<div class="a" style="left:1277px;top:685.85px;font-size:14px;line-height:14px;color:#1d2127;letter-spacing:0.15px;letter-spacing:0.8px">2210564804</div>
<div class="a" style="left:1426.7px;top:688.05px;font-size:14px;line-height:14px;color:#1d2127;letter-spacing:0.15px">Hoạt động</div>
<div class="a" style="left:1577.3px;top:694.70px;width:5px;height:1.6px;background:#1d2127"></div>
<svg style="left:1776.5px;top:689px" width="14" height="14" viewBox="0 0 14 14"><g fill="none" stroke="#1d2127" stroke-width="1.2"><path d="M1.6 6 A5.5 5.5 0 0 1 12 4.2"/><path d="M12.4 8 A5.5 5.5 0 0 1 2 9.8"/></g><path d="M12.9 1.6 L12.9 5.4 L9.3 4.9Z M1.1 12.4 L1.1 8.6 L4.7 9.1Z" fill="#1d2127"/></svg>
<svg style="left:1796px;top:689.5px" width="18" height="13" viewBox="0 0 18 13"><g fill="none" stroke="#1d2127" stroke-width="1.45"><path d="M0.9 6.5 C3 2 6 0.8 9 0.8 C12 0.8 15 2 17.1 6.5 C15 11 12 12.2 9 12.2 C6 12.2 3 11 0.9 6.5Z"/><circle cx="9" cy="6.5" r="2.4"/></g></svg>
<svg style="left:1820px;top:687px" width="17" height="17" viewBox="0 0 17 17"><g fill="none" stroke="#1d2127" stroke-width="1.3" stroke-linejoin="round"><path d="M2.8 12.6 L3 9.4 L10.4 2 L13.4 5 L6 12.4Z"/></g><rect x="0" y="15" width="16.5" height="1.5" fill="#1d2127"/></svg>
<svg style="left:1842px;top:687px" width="18" height="18" viewBox="0 0 18 18"><g fill="none" stroke="#1d2127" stroke-width="1.3"><circle cx="9" cy="9" r="8.2"/><path d="M5.3 9 H12.7"/></g></svg>
<div class="pg" style="left:1622px"></div>
<svg style="left:1638px;top:750px" width="8" height="12" viewBox="0 0 8 12"><path d="M6.8 1 L1.5 6 L6.8 11" fill="none" stroke="#a3a5a9" stroke-width="1.1"/></svg>
<div class="pg" style="left:1670px;border:1.7px solid #0c0cab"></div>
<div class="a t14" style="left:1670px;width:40px;text-align:center;top:747.05px;color:#1d2127">1</div>
<div class="pg" style="left:1718px"></div>
<svg style="left:1734px;top:750px" width="8" height="12" viewBox="0 0 8 12"><path d="M1.2 1 L6.5 6 L1.2 11" fill="none" stroke="#a3a5a9" stroke-width="1.1"/></svg>
<div class="pg" style="left:1774.5px;width:104px"></div>
<div class="a t14" style="left:1787.3px;top:747.05px;color:#1d2127">10 / trang</div>
<svg style="left:1857px;top:750px" width="10" height="7.2" viewBox="0 0 10 7.2"><path d="M0.5 0.5 L5 6.6 L9.5 0.5" fill="none" stroke="#9c9ea2" stroke-width="1.05"/></svg>
</body></html>
